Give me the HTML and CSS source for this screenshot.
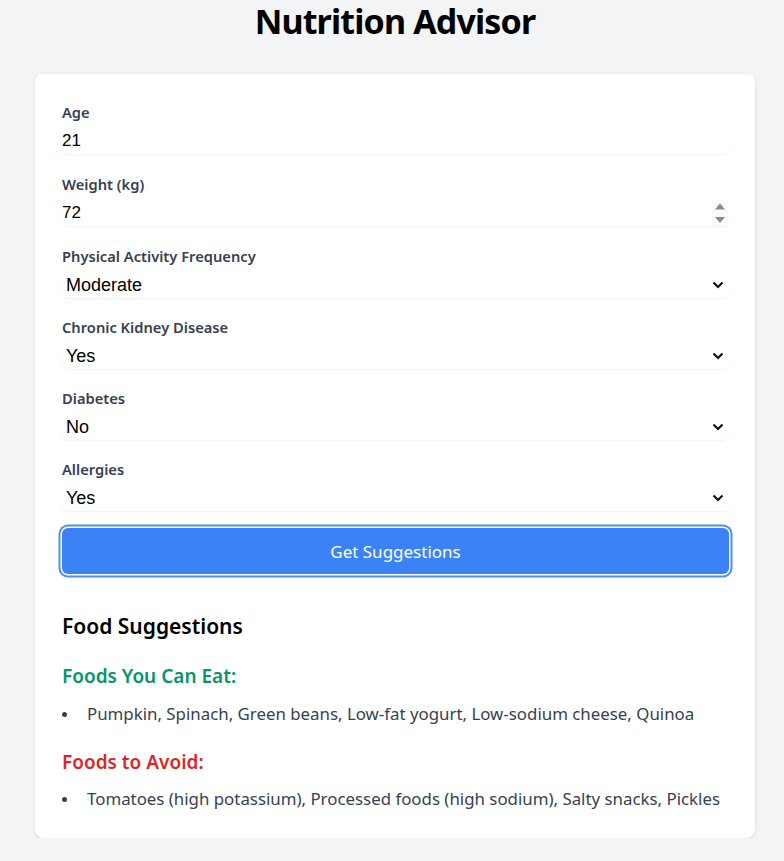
FILE: index.html
```html
<!DOCTYPE html>
<html lang="en">
<head>
<meta charset="utf-8">
<title>Nutrition Advisor</title>
<link rel="stylesheet" href="styles.css">
</head>
<body>
<main class="page">
  <h1 class="title">Nutrition Advisor</h1>
  <section class="card">
    <form class="form">
      <div class="field field-input">
        <label class="label">Age</label>
        <input class="input" type="text" value="21">
      </div>
      <div class="field field-input">
        <label class="label">Weight (kg)</label>
        <div class="number-wrap">
          <input class="input" type="text" value="72">
          <span class="spin-box">
            <svg class="spinner" width="12" height="24" viewBox="0 0 12 24">
              <path d="M1 8.5 L6 2.5 L11 8.5 Z" fill="#8a8a8a"/>
              <path d="M1 16 L6 22 L11 16 Z" fill="#8a8a8a"/>
            </svg>
          </span>
        </div>
      </div>
      <div class="field field-select">
        <label class="label">Physical Activity Frequency</label>
        <div class="select">
          <span>Moderate</span>
          <svg class="chev" width="12" height="8" viewBox="0 0 12 8"><path d="M1.5 1.5 L6 6 L10.5 1.5" fill="none" stroke="#111" stroke-width="2.2"/></svg>
        </div>
      </div>
      <div class="field field-select">
        <label class="label">Chronic Kidney Disease</label>
        <div class="select">
          <span>Yes</span>
          <svg class="chev" width="12" height="8" viewBox="0 0 12 8"><path d="M1.5 1.5 L6 6 L10.5 1.5" fill="none" stroke="#111" stroke-width="2.2"/></svg>
        </div>
      </div>
      <div class="field field-select">
        <label class="label">Diabetes</label>
        <div class="select">
          <span>No</span>
          <svg class="chev" width="12" height="8" viewBox="0 0 12 8"><path d="M1.5 1.5 L6 6 L10.5 1.5" fill="none" stroke="#111" stroke-width="2.2"/></svg>
        </div>
      </div>
      <div class="field field-select field-last">
        <label class="label">Allergies</label>
        <div class="select">
          <span>Yes</span>
          <svg class="chev" width="12" height="8" viewBox="0 0 12 8"><path d="M1.5 1.5 L6 6 L10.5 1.5" fill="none" stroke="#111" stroke-width="2.2"/></svg>
        </div>
      </div>
      <button class="button" type="button">Get Suggestions</button>
    </form>
    <div class="results">
      <h2 class="results-title">Food Suggestions</h2>
      <h3 class="sub sub-good">Foods You Can Eat:</h3>
      <ul class="list list-good">
        <li>Pumpkin, Spinach, Green beans, Low-fat yogurt, Low-sodium cheese, Quinoa</li>
      </ul>
      <h3 class="sub sub-bad">Foods to Avoid:</h3>
      <ul class="list list-bad">
        <li>Tomatoes (high potassium), Processed foods (high sodium), Salty snacks, Pickles</li>
      </ul>
    </div>
  </section>
</main>
</body>
</html>
```
FILE: styles.css
```css
* { box-sizing: border-box; }
html, body { margin: 0; padding: 0; }
body {
  background: #f3f4f6;
  font-family: "Noto Sans", "Open Sans", sans-serif;
  color: #111;
}
.page {
  display: flex;
  flex-direction: column;
  align-items: center;
  padding-left: 6px;
}
.title {
  margin: 0;
  padding-top: 2px;
  height: 74px;
  line-height: 38px;
  font-size: 34px;
  letter-spacing: -0.85px;
  font-weight: 700;
  color: #000;
}
.card {
  width: 720px;
  background: #fff;
  border-radius: 8px;
  box-shadow: 0 1px 3px rgba(0,0,0,0.12), 0 1px 2px rgba(0,0,0,0.06);
  padding: 28px 26px 26px 27px;
}
.form {
  display: flex;
  flex-direction: column;
}
.field {
  display: flex;
  flex-direction: column;
}
.field-input { margin-bottom: 20px; }
.field-select { margin-bottom: 19px; }
.field-last { margin-bottom: 17px; }
.label {
  font-size: 14.7px;
  line-height: 20px;
  font-weight: 600;
  color: #374151;
}
.input {
  margin-top: 5px;
  width: 100%;
  height: 27px;
  border: 0;
  padding: 0;
  font-family: "Liberation Sans", Arial, sans-serif;
  font-size: 17px;
  color: #000;
  background: #fff;
  border-radius: 6px;
  box-shadow: 0 1px 2px rgba(0,0,0,0.06);
  outline: none;
}
.number-wrap { position: relative; }
.spin-box {
  position: absolute;
  right: 1px;
  top: 6px;
  width: 16px;
  height: 26px;
  display: flex;
  align-items: center;
  justify-content: center;
  background: #fafafa;
}
.select {
  margin-top: 6px;
  height: 26px;
  display: flex;
  align-items: center;
  justify-content: space-between;
  padding: 0 4px;
  font-family: "Liberation Sans", Arial, sans-serif;
  font-size: 18px;
  color: #000;
  border-radius: 6px;
  box-shadow: 0 1px 2px rgba(0,0,0,0.06);
}
.chev { margin-right: 1px; }
.button {
  height: 46px;
  width: 100%;
  border: 0;
  border-radius: 6px;
  background: #3b82f6;
  color: #fff;
  font-family: "Noto Sans", "Open Sans", sans-serif;
  font-size: 17px;
  box-shadow: 0 0 0 1.5px #fff, 0 0 0 3.5px #4f8ef5;
}
.results { margin-top: 38px; }
.results-title {
  margin: 0;
  font-size: 21px;
  line-height: 28px;
  font-weight: 600;
  color: #000;
}
.sub {
  margin: 0;
  font-size: 19px;
  line-height: 28px;
  font-weight: 600;
}
.sub-good { color: #059669; margin-top: 22px; }
.sub-bad { color: #dc2626; margin-top: 21px; }
.list {
  list-style: none;
  margin: 0;
  padding: 0;
  color: #374151;
  font-size: 16.85px;
  line-height: 26px;
}
.list-good { margin-top: 11px; }
.list-bad { margin-top: 10px; }
.list li {
  display: flex;
  align-items: center;
}
.list li::before {
  content: "";
  width: 5px;
  height: 5px;
  border-radius: 50%;
  background: #374151;
  margin: 0 20px 0 0;
  flex: none;
}
```
